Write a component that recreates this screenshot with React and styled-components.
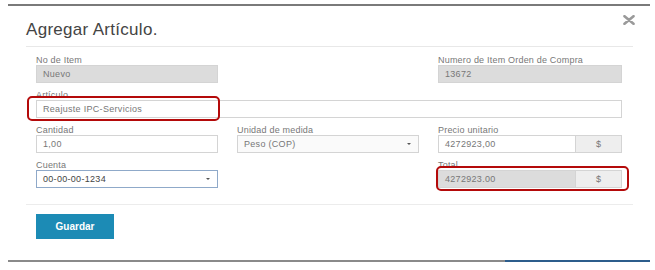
import React from "react";
import styled, { createGlobalStyle } from "styled-components";

const GlobalStyle = createGlobalStyle`
  html, body {
    margin: 0;
    padding: 0;
    background: #fff;
    font-family: "Liberation Sans", Arial, sans-serif;
  }
`;

const Page = styled.div`
  width: 655px;
  height: 270px;
  box-sizing: border-box;
  padding: 4px 5px 0 8px;
  display: flex;
  flex-direction: column;
`;

const Modal = styled.div`
  border-top: 2px solid #7a7a7a;
  height: 256px;
  box-sizing: border-box;
  padding: 0 17px 0 18px;
  display: flex;
  flex-direction: column;
`;

const BottomEdge = styled.div`
  height: 2px;
  background: linear-gradient(to right, #8a8a8a 0, #8a8a8a 497px, #2c5d8c 497px, #2c5d8c 643px, transparent 643px);
`;

const Header = styled.div`
  display: flex;
  align-items: flex-start;
  justify-content: space-between;
  height: 41px;
  border-bottom: 1px solid #e8e8e8;
  box-sizing: border-box;
`;

const Title = styled.h1`
  margin: 14px 0 0;
  font-size: 17px;
  font-weight: 400;
  color: #444;
  letter-spacing: 0.3px;
`;

const Close = styled.button`
  border: 0;
  background: none;
  padding: 0;
  margin: 9px -2px 0 0;
  width: 12px;
  height: 10px;
  display: flex;
`;

const Body = styled.div`
  display: grid;
  grid-template-columns: 182px 182px 184px;
  column-gap: 19px;
  row-gap: 8px;
  padding: 9px 0 0 10px;
`;

const Field = styled.div`
  position: relative;
  grid-column: ${(p) => p.$col || "auto"} / span ${(p) => p.$span || 1};
`;

const Label = styled.div`
  font-size: 9px;
  line-height: 9px;
  color: #777;
  letter-spacing: 0.2px;
`;

const Input = styled.div`
  height: 18px;
  box-sizing: border-box;
  border: 1px solid ${(p) => (p.$focus ? "#8fa9c9" : "#d4d4d4")};
  background: ${(p) => (p.$readonly ? "#dcdcdc" : p.$soft ? "#fafafa" : "#fff")};
  padding: 0 6px;
  display: flex;
  align-items: center;
  justify-content: space-between;
  font-size: 9px;
  letter-spacing: 0.3px;
  color: ${(p) => (p.$focus ? "#444" : "#777")};
  flex: 1;
`;

const Group = styled.div`
  display: flex;
`;

const Addon = styled.div`
  width: 46px;
  height: 18px;
  box-sizing: border-box;
  border: 1px solid #d4d4d4;
  border-left: 0;
  background: #eee;
  display: flex;
  align-items: center;
  justify-content: center;
  font-size: 9px;
  color: #777;
`;

const Caret = styled.span`
  width: 0;
  height: 0;
  border-left: 2px solid transparent;
  border-right: 2px solid transparent;
  border-top: 2px solid #555;
  margin-right: 1px;
`;

const Highlight = styled.div`
  position: absolute;
  left: ${(p) => p.$left}px;
  top: ${(p) => p.$top}px;
  width: ${(p) => p.$w}px;
  height: ${(p) => p.$h}px;
  box-sizing: border-box;
  border: 2.5px solid #b40a0a;
  border-radius: 5px;
  pointer-events: none;
`;

const Footer = styled.div`
  margin-top: 16px;
  border-top: 1px solid #ececec;
  padding: 9px 0 0 10px;
`;

const SaveButton = styled.button`
  width: 78px;
  height: 25px;
  border: 0;
  background: #1c8bb5;
  color: #fff;
  font-family: "Liberation Sans", Arial, sans-serif;
  font-size: 10px;
  font-weight: 700;
`;

export default function App() {
  return (
    <>
      <GlobalStyle />
      <Page>
        <Modal>
          <Header>
            <Title>Agregar Artículo.</Title>
            <Close aria-label="Cerrar">
              <svg width="12" height="10" viewBox="0 0 12 10">
                <path d="M1.5 1.2 L10.5 8.8 M10.5 1.2 L1.5 8.8" stroke="#9a9a9a" strokeWidth="2.6" strokeLinecap="round" />
              </svg>
            </Close>
          </Header>
          <Body>
            <Field $col={1}>
              <Label>No de Item</Label>
              <Input $readonly>Nuevo</Input>
            </Field>
            <Field $col={3}>
              <Label>Numero de Item Orden de Compra</Label>
              <Input $readonly>13672</Input>
            </Field>

            <Field $col={1} $span={3}>
              <Label>Artículo</Label>
              <Input>Reajuste IPC-Servicios</Input>
              <Highlight $left={-9} $top={5} $w={193} $h={25} />
            </Field>

            <Field $col={1}>
              <Label>Cantidad</Label>
              <Input>1,00</Input>
            </Field>
            <Field $col={2}>
              <Label>Unidad de medida</Label>
              <Input $soft>
                Peso (COP)
                <Caret />
              </Input>
            </Field>
            <Field $col={3}>
              <Label>Precio unitario</Label>
              <Group>
                <Input>4272923,00</Input>
                <Addon>$</Addon>
              </Group>
            </Field>

            <Field $col={1}>
              <Label>Cuenta</Label>
              <Input $focus>
                00-00-00-1234
                <Caret />
              </Input>
            </Field>
            <Field $col={3}>
              <Label>Total</Label>
              <Group>
                <Input $readonly>4272923.00</Input>
                <Addon>$</Addon>
              </Group>
              <Highlight $left={-2} $top={5} $w={193} $h={25} />
            </Field>
          </Body>
          <Footer>
            <SaveButton>Guardar</SaveButton>
          </Footer>
        </Modal>
        <BottomEdge />
      </Page>
    </>
  );
}
